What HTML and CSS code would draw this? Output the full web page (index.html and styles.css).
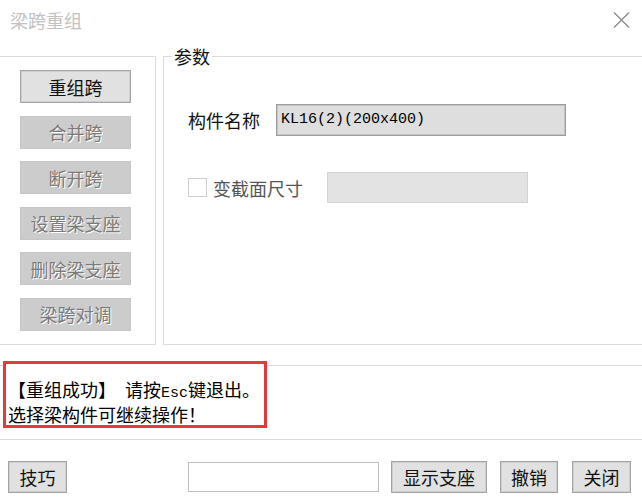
FILE: index.html
```html
<!DOCTYPE html>
<html lang="zh-CN">
<head>
  <meta charset="UTF-8" />
  <title>梁跨重组</title>
  <link rel="stylesheet" href="styles.css">
</head>
<body>
  <div class="dialog">
    <header class="titlebar">
      <span class="title">梁跨重组</span>
      <svg class="close" width="17" height="16" viewBox="0 0 17 16">
        <path d="M1 0.5 L16 15.5 M16 0.5 L1 15.5" stroke="#8a8a8a" stroke-width="1.3" fill="none" />
      </svg>
    </header>

    <div class="main">
      <div class="tools">
        <button class="btn btn-tool">重组跨</button>
        <button class="btn btn-tool" disabled>合并跨</button>
        <button class="btn btn-tool" disabled>断开跨</button>
        <button class="btn btn-tool" disabled>设置梁支座</button>
        <button class="btn btn-tool" disabled>删除梁支座</button>
        <button class="btn btn-tool" disabled>梁跨对调</button>
      </div>

      <fieldset class="params">
        <legend>参数</legend>
        <div class="field-row">
          <span class="field-label">构件名称</span>
          <div class="field-value">KL16(2)(200x400)</div>
        </div>
        <div class="field-row field-row-check">
          <span class="check"></span>
          <span class="field-label muted">变截面尺寸</span>
          <div class="field-value field-empty"></div>
        </div>
      </fieldset>
    </div>

    <div class="status">
      <div class="status-msg">
        <p>【重组成功】　请按<span class="mono">Esc</span>键退出。</p>
        <p>选择梁构件可继续操作！</p>
      </div>
    </div>

    <div class="actions">
      <button class="btn btn-tip">技巧</button>
      <input class="search" type="text" />
      <button class="btn btn-show">显示支座</button>
      <button class="btn btn-undo">撤销</button>
      <button class="btn btn-close">关闭</button>
    </div>
  </div>
</body>
</html>
```

FILE: styles.css
```css
:root {
  --line: #dcdcdc;
  --btn-bg: #e1e1e1;
  --btn-border: #a3a3a3;
  --off-bg: #cccccc;
  --red: #e5393b;
  --text: #111;
}

* {
  box-sizing: border-box;
  margin: 0;
  padding: 0;
}

body {
  width: 642px;
  height: 504px;
  overflow: hidden;
  background: #fff;
  font-family: "Noto Sans CJK SC", sans-serif;
  font-size: 18px;
  line-height: 20px;
  color: var(--text);
}

.titlebar {
  height: 46px;
  display: flex;
  justify-content: space-between;
  align-items: flex-start;
  padding: 10px 12px 0 10px;
}

.title {
  color: #c2c2c2;
}

.close {
  margin-top: 2px;
}

/* main area */
.main {
  display: flex;
  align-items: flex-start;
  height: 299px;
}

.tools {
  width: 157px;
  height: 289px;
  margin-top: 10px;
  margin-left: -1px;
  border: 1px solid var(--line);
  padding: 13px 0 0 20px;
  display: flex;
  flex-direction: column;
  gap: 12.6px;
}

.btn {
  font-family: inherit;
  font-size: 18px;
  line-height: 20px;
  color: var(--text);
  background: var(--btn-bg);
  border: 1px solid var(--btn-border);
  box-shadow: inset 0 0 0 1px #cfcfcf;
  height: 32px;
  padding: 0;
  appearance: none;
}

.btn-tool {
  width: 111px;
  height: 33px;
}

.btn:disabled {
  background: var(--off-bg);
  border-color: #c6c6c6;
  box-shadow: none;
  color: #7a7a7a;
  text-shadow: 1px 1px 0 #fff;
}

.params {
  flex: 1;
  height: 299px;
  margin: 0 -10px 0 7px;
  border: 1px solid var(--line);
  padding: 0 0 0 24px;
  min-width: 0;
}

.params legend {
  margin-left: -16px;
  padding: 0 2px;
  line-height: 20px;
}

.field-row {
  display: flex;
  align-items: center;
  margin-top: 38px;
  height: 32px;
}

.field-label {
  width: 88px;
}

.field-value {
  width: 290px;
  height: 32px;
  background: #dedede;
  border: 1px solid #9c9c9c;
  box-shadow: inset 0 0 0 1px #c4c4c4;
  padding: 0 4px;
  font-family: "Liberation Mono", monospace;
  font-size: 15px;
  line-height: 30px;
  color: #000;
}

.field-row-check {
  margin-top: 36px;
  height: 31px;
}

.check {
  width: 19px;
  height: 19px;
  border: 1px solid #cfcfcf;
  background: #fff;
  margin-right: 6px;
}

.muted {
  color: #555;
  width: 114px;
}

.field-empty {
  width: 201px;
  height: 31px;
  background: #e3e3e3;
  border-color: #d3d3d3;
  box-shadow: none;
}

/* message */
.status {
  margin-top: 20px;
  border-top: 1px solid var(--line);
  border-bottom: 1px solid var(--line);
  padding-bottom: 11px;
}

.status-msg {
  width: 264px;
  height: 67px;
  margin: -5px 0 0 3px;
  border: 3px solid var(--red);
  padding: 15px 0 0 2px;
  background: #fff;
  white-space: nowrap;
  color: #000;
}

.mono {
  font-family: "Liberation Mono", monospace;
  font-size: 15px;
}

/* bottom buttons */
.actions {
  display: flex;
  align-items: center;
  margin-top: 21px;
  padding-left: 8px;
}

.btn-tip {
  width: 59px;
}

.search {
  width: 191px;
  height: 30px;
  margin-left: 121px;
  border: 1px solid #bdbdbd;
  background: #fff;
}

.btn-show {
  width: 96px;
  margin-left: 12px;
}

.btn-undo {
  width: 58px;
  margin-left: 13px;
}

.btn-close {
  width: 59px;
  margin-left: 14px;
}
```
